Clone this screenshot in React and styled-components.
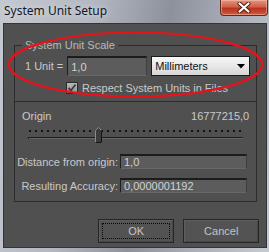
import React from "react";
import styled, { createGlobalStyle } from "styled-components";

const GlobalStyle = createGlobalStyle`
  html, body {
    margin: 0;
    padding: 0;
    background: #ffffff;
  }
  body {
    font-family: "Liberation Sans", Arial, sans-serif;
  }
`;

const Window = styled.div`
  position: relative;
  width: 269px;
  height: 252px;
  display: flex;
  flex-direction: column;
  overflow: hidden;
  background: linear-gradient(
    100deg,
    #c3c8d1 0%,
    #b3b8c2 30%,
    #8d919c 55%,
    #a9adb7 75%,
    #c6cad2 100%
  );
`;

const TitleBar = styled.div`
  height: 23px;
  display: flex;
  align-items: flex-start;
  justify-content: space-between;
  padding-left: 4px;
  box-sizing: border-box;
`;

const Title = styled.div`
  margin-top: 3px;
  font-family: "Noto Sans", "Liberation Sans", sans-serif;
  font-size: 12px;
  line-height: 15px;
  color: #141826;
  text-shadow: 0 0 6px rgba(255, 255, 255, 0.8);
`;

const CloseButton = styled.div`
  width: 48px;
  height: 16px;
  margin-right: 1px;
  box-sizing: border-box;
  border: 1px solid #5e2a22;
  border-top: none;
  border-radius: 0 0 4px 4px;
  background: linear-gradient(
    180deg,
    #e3957f 0%,
    #d2604a 45%,
    #b8321e 55%,
    #cf5a3c 100%
  );
  box-shadow: inset 0 0 0 1px rgba(255, 210, 190, 0.45);
  display: flex;
  align-items: center;
  justify-content: center;
`;

const Frame = styled.div`
  flex: 1;
  display: flex;
  padding: 0 3px 4px 3px;
`;

const Client = styled.div`
  flex: 1;
  display: flex;
  flex-direction: column;
  background: #505050;
  border: 1px solid #33353a;
  padding: 14px 9px 0 10px;
  font-family: "Liberation Sans", Arial, sans-serif;
  font-size: 11px;
  color: #c9c9c9;
`;

const Group = styled.fieldset`
  margin: 0;
  margin-top: ${(p) => (p.$joined ? "-1px" : "0")};
  border: 1px solid #2c2c2c;
  padding: ${(p) => p.$pad};
  min-width: 0;
  display: flex;
  flex-direction: column;
`;

const Legend = styled.legend`
  margin-left: -3px;
  padding: 0 3px;
  font-size: 11px;
  line-height: 14px;
  color: #b9b9b9;
`;

const Row = styled.div`
  display: flex;
  align-items: center;
  gap: ${(p) => p.$gap || 0}px;
  margin-top: ${(p) => p.$top || 0}px;
  padding-left: ${(p) => p.$indent || 0}px;
`;

const Label = styled.span`
  line-height: 14px;
  white-space: nowrap;
  min-width: ${(p) => p.$min || 0}px;
`;

const TextInput = styled.div`
  box-sizing: border-box;
  width: ${(p) => p.$w}px;
  height: ${(p) => p.$h}px;
  background: #5c5c5c;
  border-top: 2px solid #1c1c1c;
  border-left: 1px solid #1f1f1f;
  border-right: 1px solid #3e3e3e;
  border-bottom: 1px solid #686868;
  padding-left: 3px;
  display: flex;
  align-items: center;
  color: #d2d2d2;
  font-size: 11px;
`;

const Dropdown = styled.div`
  box-sizing: border-box;
  width: 99px;
  height: 20px;
  border: 1px solid #1a1a1a;
  background: linear-gradient(180deg, #f7f7f7 0%, #e8e8e8 50%, #d6d6d6 100%);
  display: flex;
  align-items: center;
  justify-content: space-between;
  padding: 0 4px 0 3px;
  color: #111;
  font-size: 11px;
`;

const Checkbox = styled.div`
  box-sizing: border-box;
  width: 12px;
  height: 12px;
  border: 1px solid #2a2a2a;
  background: linear-gradient(180deg, #b8b8b8 0%, #939393 100%);
  display: flex;
  align-items: center;
  justify-content: center;
`;

const SpaceRow = styled.div`
  display: flex;
  justify-content: space-between;
  line-height: 14px;
`;

const SliderBox = styled.div`
  margin-top: 4px;
  padding-left: 6px;
  height: 16px;
`;

const FieldGrid = styled.div`
  display: grid;
  grid-template-columns: 96px 127px;
  column-gap: 2px;
  row-gap: 9px;
  align-items: center;
  margin-top: 11px;
`;

const FieldLabel = styled.span`
  justify-self: end;
  white-space: nowrap;
  line-height: 14px;
`;

const ButtonRow = styled.div`
  display: flex;
  justify-content: flex-end;
  gap: 9px;
  margin-top: 17px;
  margin-right: -2px;
`;

const Button = styled.div`
  position: relative;
  box-sizing: border-box;
  width: 76px;
  height: 24px;
  border: 1px solid #262626;
  background: #535353;
  box-shadow: inset 1px 1px 0 #5e5e5e, inset -1px -1px 0 #474747;
  display: flex;
  align-items: center;
  justify-content: center;
  color: #c4c4c4;
  font-size: 11px;
  &::after {
    content: "";
    display: ${(p) => (p.$focused ? "block" : "none")};
    position: absolute;
    inset: 3px;
    border: 1px dotted #0a0a0a;
  }
`;

const Annotation = styled.svg`
  position: absolute;
  left: 0;
  top: 0;
  pointer-events: none;
`;

const Slider = () => {
  const dots = [];
  for (let x = 1; x < 217; x += 6) {
    dots.push(<rect key={x} x={x} y={3} width={2} height={2} fill="#111" />);
  }
  return (
    <svg width="220" height="16" viewBox="0 0 220 16">
      {dots}
      <rect x="0" y="10" width="215" height="1" fill="#1e1e1e" />
      <rect x="0" y="11" width="215" height="1" fill="#666" />
      <rect x="0" y="10" width="1" height="2" fill="#1e1e1e" />
      <path
        d="M67.5 15.5 V3.5 L70.5 0.5 L73.5 3.5 V15.5 Z"
        fill="#3b3b3b"
        stroke="#8a8a8a"
        strokeWidth="1"
      />
      <path d="M67.5 15.5 H73.5 V3.5" fill="none" stroke="#151515" />
    </svg>
  );
};

export default function App() {
  return (
    <>
      <GlobalStyle />
      <Window>
        <TitleBar>
          <Title>System Unit Setup</Title>
          <CloseButton>
            <svg width="14" height="11" viewBox="0 0 14 11">
              <path
                d="M2.5 1.5 L11.5 9.5 M11.5 1.5 L2.5 9.5"
                stroke="#4a1a12"
                strokeWidth="4"
                strokeLinecap="round"
              />
              <path
                d="M2.5 1.5 L11.5 9.5 M11.5 1.5 L2.5 9.5"
                stroke="#ffffff"
                strokeWidth="2.2"
                strokeLinecap="round"
              />
            </svg>
          </CloseButton>
        </TitleBar>
        <Frame>
          <Client>
            <Group $pad="4px 6px 6px 10px">
              <Legend>System Unit Scale</Legend>
              <Row $gap={4}>
                <Label $min={37}>1 Unit =</Label>
                <TextInput $w={80} $h={20}>1,0</TextInput>
                <Dropdown>
                  <span>Millimeters</span>
                  <svg width="8" height="5" viewBox="0 0 8 5">
                    <path d="M0 0 H8 L4 4.5 Z" fill="#000" />
                  </svg>
                </Dropdown>
              </Row>
              <Row $gap={4} $top={5} $indent={41}>
                <Checkbox>
                  <svg width="10" height="10" viewBox="0 0 10 10">
                    <path
                      d="M1.5 5 L4 7.5 L8.5 1.5"
                      fill="none"
                      stroke="#3c3c3c"
                      strokeWidth="1.8"
                    />
                  </svg>
                </Checkbox>
                <Label>Respect System Units in Files</Label>
              </Row>
            </Group>
            <Group $joined $pad="7px 7px 8px 7px">
              <SpaceRow>
                <span>Origin</span>
                <span>16777215,0</span>
              </SpaceRow>
              <SliderBox>
                <Slider />
              </SliderBox>
              <FieldGrid>
                <FieldLabel>Distance from origin:</FieldLabel>
                <TextInput $w={127} $h={15}>1,0</TextInput>
                <FieldLabel>Resulting Accuracy:</FieldLabel>
                <TextInput $w={127} $h={15}>0,0000001192</TextInput>
              </FieldGrid>
            </Group>
            <ButtonRow>
              <Button $focused>OK</Button>
              <Button>Cancel</Button>
            </ButtonRow>
          </Client>
        </Frame>
        <Annotation width="269" height="252" viewBox="0 0 269 252">
          <ellipse
            cx="135.5"
            cy="64.5"
            rx="126.5"
            ry="32"
            fill="none"
            stroke="#e8121a"
            strokeWidth="2.2"
          />
        </Annotation>
      </Window>
    </>
  );
}
